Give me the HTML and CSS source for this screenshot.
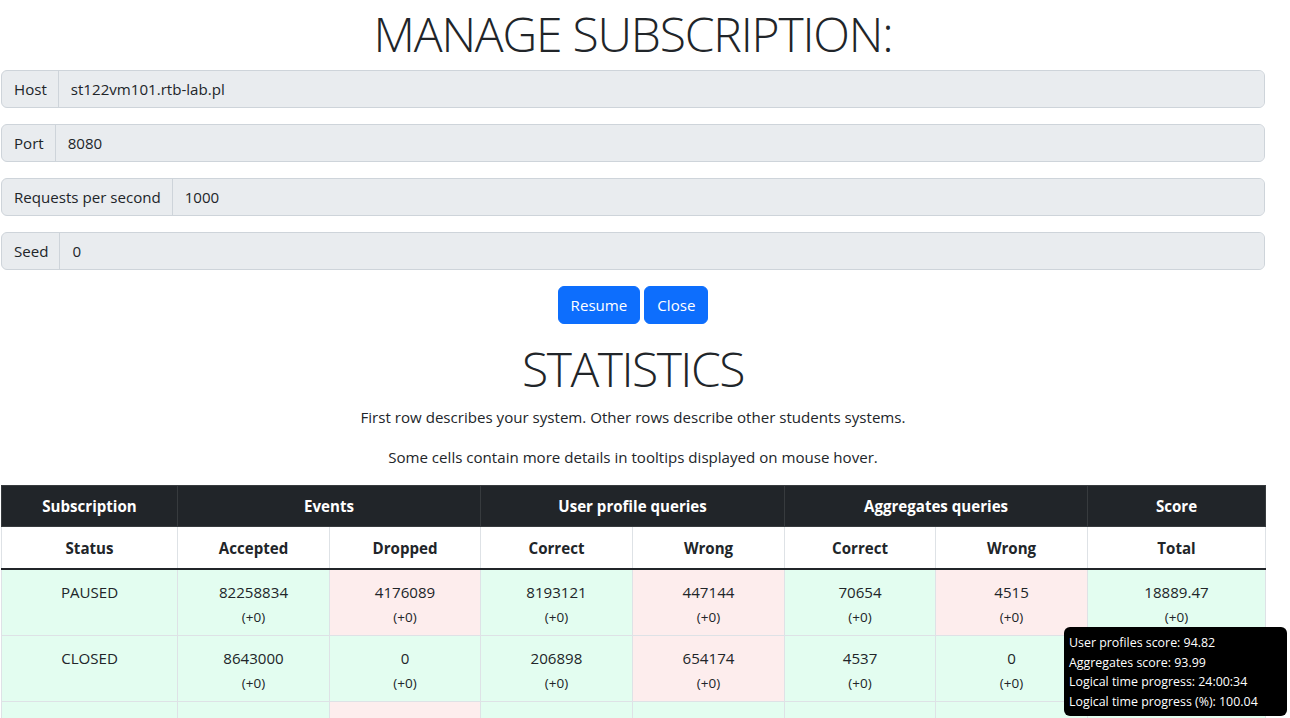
FILE: index.html
```html
<!DOCTYPE html>
<html lang="en">
<head>
<meta charset="utf-8">
<title>Manage subscription</title>
<link rel="stylesheet" href="styles.css">
</head>
<body>
<main class="page">
  <h1 class="title title-top">MANAGE SUBSCRIPTION:</h1>

  <div class="input-group">
    <span class="ig-label">Host</span>
    <input class="ig-input" type="text" value="st122vm101.rtb-lab.pl" disabled>
  </div>
  <div class="input-group">
    <span class="ig-label">Port</span>
    <input class="ig-input" type="text" value="8080" disabled>
  </div>
  <div class="input-group">
    <span class="ig-label">Requests per second</span>
    <input class="ig-input" type="text" value="1000" disabled>
  </div>
  <div class="input-group">
    <span class="ig-label">Seed</span>
    <input class="ig-input" type="text" value="0" disabled>
  </div>

  <div class="actions">
    <button class="btn" type="button">Resume</button>
    <button class="btn" type="button">Close</button>
  </div>

  <h1 class="title title-stats">STATISTICS</h1>
  <p class="note">First row describes your system. Other rows describe other students systems.</p>
  <p class="note">Some cells contain more details in tooltips displayed on mouse hover.</p>

  <table class="stats">
    <colgroup>
      <col class="c-wide-l"><col class="c-1"><col class="c-2"><col class="c-1"><col class="c-1"><col class="c-2"><col class="c-1"><col class="c-wide-r">
    </colgroup>
    <thead>
      <tr class="group-row">
        <th>Subscription</th>
        <th colspan="2">Events</th>
        <th colspan="2">User profile queries</th>
        <th colspan="2">Aggregates queries</th>
        <th>Score</th>
      </tr>
      <tr class="sub-row">
        <th>Status</th>
        <th>Accepted</th>
        <th>Dropped</th>
        <th>Correct</th>
        <th>Wrong</th>
        <th>Correct</th>
        <th>Wrong</th>
        <th>Total</th>
      </tr>
    </thead>
    <tbody>
      <tr>
        <td class="ok"><div class="v">PAUSED</div><div class="d">&nbsp;</div></td>
        <td class="ok"><div class="v">82258834</div><div class="d">(+0)</div></td>
        <td class="bad"><div class="v">4176089</div><div class="d">(+0)</div></td>
        <td class="ok"><div class="v">8193121</div><div class="d">(+0)</div></td>
        <td class="bad"><div class="v">447144</div><div class="d">(+0)</div></td>
        <td class="ok"><div class="v">70654</div><div class="d">(+0)</div></td>
        <td class="bad"><div class="v">4515</div><div class="d">(+0)</div></td>
        <td class="ok"><div class="v">18889.47</div><div class="d">(+0)</div></td>
      </tr>
      <tr>
        <td class="ok"><div class="v">CLOSED</div><div class="d">&nbsp;</div></td>
        <td class="ok"><div class="v">8643000</div><div class="d">(+0)</div></td>
        <td class="ok"><div class="v">0</div><div class="d">(+0)</div></td>
        <td class="ok"><div class="v">206898</div><div class="d">(+0)</div></td>
        <td class="bad"><div class="v">654174</div><div class="d">(+0)</div></td>
        <td class="ok"><div class="v">4537</div><div class="d">(+0)</div></td>
        <td class="ok"><div class="v">0</div><div class="d">(+0)</div></td>
        <td class="ok"><div class="v">&nbsp;</div><div class="d">&nbsp;</div></td>
      </tr>
      <tr>
        <td class="ok"><div class="v">&nbsp;</div><div class="d">&nbsp;</div></td>
        <td class="ok"><div class="v">&nbsp;</div><div class="d">&nbsp;</div></td>
        <td class="bad"><div class="v">&nbsp;</div><div class="d">&nbsp;</div></td>
        <td class="ok"><div class="v">&nbsp;</div><div class="d">&nbsp;</div></td>
        <td class="ok"><div class="v">&nbsp;</div><div class="d">&nbsp;</div></td>
        <td class="ok"><div class="v">&nbsp;</div><div class="d">&nbsp;</div></td>
        <td class="ok"><div class="v">&nbsp;</div><div class="d">&nbsp;</div></td>
        <td class="ok"><div class="v">&nbsp;</div><div class="d">&nbsp;</div></td>
      </tr>
    </tbody>
  </table>
</main>

<div class="tooltip" role="tooltip">
  <div>User profiles score: 94.82</div>
  <div>Aggregates score: 93.99</div>
  <div>Logical time progress: 24:00:34</div>
  <div>Logical time progress (%): 100.04</div>
</div>
</body>
</html>
```
FILE: styles.css
```css
* { box-sizing: border-box; }

html, body {
  margin: 0;
  padding: 0;
  background: #fff;
}

body {
  font-family: "Open Sans", "Noto Sans", sans-serif;
  font-size: 15.1px;
  line-height: 24px;
  color: #212529;
  overflow: hidden;
}

.page {
  width: 1264px;
  margin-left: 1px;
  padding-top: 4px;
}

.title {
  margin: 0;
  text-align: center;
  font-size: 48px;
  font-weight: 300;
  line-height: 60px;
  letter-spacing: -1.2px;
  color: #212529;
}

.title-top { margin-bottom: 6px; }
.title-stats { margin-bottom: 6px; letter-spacing: -1.5px; }

.input-group {
  display: flex;
  height: 38px;
  margin-bottom: 16px;
  border: 1px solid #ced4da;
  border-radius: 6px;
  background: #e9ecef;
  overflow: hidden;
}

.ig-label {
  display: flex;
  align-items: center;
  padding: 0 11px 0 12px;
  border-right: 1px solid #ced4da;
  white-space: nowrap;
  color: #212529;
}

.ig-input {
  flex: 1;
  min-width: 0;
  border: 0;
  margin: 0;
  padding: 0 12px;
  background: #e9ecef;
  font: inherit;
  color: #212529;
  -webkit-text-fill-color: #212529;
  opacity: 1;
  outline: none;
}

.actions {
  display: flex;
  justify-content: center;
  gap: 4px;
  margin-bottom: 15px;
}

.btn {
  height: 38px;
  padding: 0 12px;
  border: 1px solid #0d6efd;
  border-radius: 6px;
  background: #0d6efd;
  color: #fff;
  font: inherit;
  cursor: pointer;
}

.note {
  margin: 0 0 16px;
  text-align: center;
}

.stats {
  width: 1264px;
  border-collapse: collapse;
  table-layout: fixed;
  text-align: center;
}

.c-wide-l { width: 176px; }
.c-1 { width: 152px; }
.c-2 { width: 151px; }
.c-wide-r { width: 178px; }

.stats th {
  padding: 8px;
  font-weight: 700;
  line-height: 24px;
  border: 1px solid #dee2e6;
}

.group-row th {
  background: #212529;
  color: #fff;
  border-color: #373b3e;
  height: 41px;
}

.sub-row th {
  background: #fff;
  color: #212529;
  height: 42px;
  padding-top: 9px;
  padding-bottom: 7px;
  border-bottom: 2px solid #212529;
}

.stats td {
  padding: 10px 8px 5px;
  border: 1px solid #dee2e6;
  vertical-align: top;
}

.stats tbody tr:first-child td { border-top: 2px solid #212529; }

.ok { background: #e3fdf0; }
.bad { background: #fdeded; }

.v {
  line-height: 24px;
}

.d {
  font-size: 13.5px;
  line-height: 26px;
}

.tooltip {
  position: absolute;
  left: 1064px;
  top: 627px;
  width: 223px;
  height: 89px;
  padding: 6px 5px 4px;
  background: #000;
  color: #fff;
  border-radius: 6px;
  font-size: 12.4px;
  line-height: 19.5px;
  text-align: left;
  white-space: nowrap;
}
```
